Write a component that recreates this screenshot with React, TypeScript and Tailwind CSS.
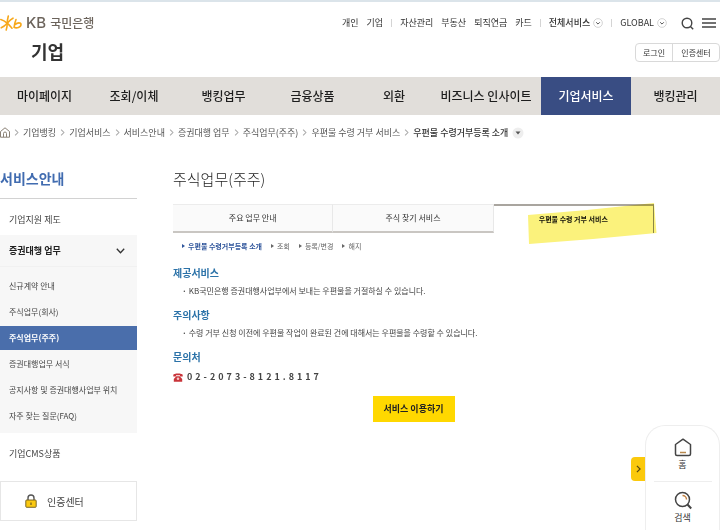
import React from 'react';

const navItems = ['마이페이지', '조회/이체', '뱅킹업무', '금융상품', '외환', '비즈니스 인사이트', '기업서비스', '뱅킹관리'];

const crumbs = ['기업뱅킹', '기업서비스', '서비스안내', '증권대행 업무', '주식업무(주주)', '우편물 수령 거부 서비스'];

const subMenu = [
  '신규계약 안내',
  '주식업무(회사)',
  '주식업무(주주)',
  '증권대행업무 서식',
  '공지사항 및 증권대행사업부 위치',
  '자주 찾는 질문(FAQ)',
];

const tabs = ['주요 업무 안내', '주식 찾기 서비스', '우편물 수령 거부 서비스'];

const subTabs = ['우편물 수령거부등록 소개', '조회', '등록/변경', '해지'];

// digits are set apart with three-per-em spaces
const phone = '02-2073-8121.8117'.split('').join('\u2004');

const Chevron: React.FC<{ className?: string }> = ({ className }) => (
  <svg viewBox="0 0 6 10" className={className} fill="none" stroke="currentColor" strokeWidth="1.5">
    <path d="M1 1l4 4-4 4" />
  </svg>
);

const CircleDown: React.FC = () => (
  <svg viewBox="0 0 11 11" className="h-[10px] w-[10px]" fill="none">
    <circle cx="5.5" cy="5.5" r="4.8" stroke="#c4c4c4" strokeWidth="0.8" />
    <path d="M3.5 4.7l2 2 2-2" stroke="#555" strokeWidth="1.1" />
  </svg>
);

const Divider: React.FC = () => <span className="h-2 w-px bg-[#d4d4d4]" />;

const Logo: React.FC = () => (
  <a href="#" className="flex items-center text-[#6b635b]">
    <svg viewBox="0 0 22 16" className="h-4 w-[22px]" fill="none" stroke="#f7a81b" strokeWidth="1.6" strokeLinecap="round">
      <path d="M0.8 4.6C3.5 5.4 5.5 6.8 7.2 8.2C9 9.700 10.500 11.500 12 13.200" />
      <path d="M1.200 12.800C3.500 11.800 5.500 10 7.200 8.200C8.800 6.500 10.500 4.500 13 3.200" />
      <path d="M8.300 1C7.600 4 7.200 6 7.200 8.200C7.200 10.500 7 12.500 6.200 15" />
      <path d="M16 4.500C15 7 14.300 9.500 14.100 12.300C16.500 13.600 21 12.300 21 9.500C21 7.300 17.500 7.300 15 9.600" />
    </svg>
    <span className="ml-1 font-[Inter,sans-serif] text-[15px] leading-4 font-medium">KB</span>
    <span className="ml-1 text-xs leading-4 font-medium">국민은행</span>
  </a>
);

const Header: React.FC = () => (
  <header className="border-t-2 border-[#dbe4ea] text-[#333]">
    <div className="flex h-[75px] justify-between">
      <div className="pt-[13px]">
        <Logo />
        <h1 className="mt-2 ml-[31px] text-lg leading-6 font-bold">기업</h1>
      </div>
      <div className="flex flex-col items-end">
        <div className="mt-[13px] flex h-4 items-center gap-2 pr-1 text-[9px] leading-4">
          <a href="#">개인</a>
          <a href="#">기업</a>
          <Divider />
          <a href="#">자산관리</a>
          <a href="#">부동산</a>
          <a href="#">퇴직연금</a>
          <a href="#">카드</a>
          <Divider />
          <button className="flex items-center gap-[3px] font-medium">전체서비스 <CircleDown /></button>
          <Divider />
          <button className="flex items-center gap-[3px]">GLOBAL <CircleDown /></button>
          <button aria-label="검색" className="ml-[6px]">
            <svg viewBox="0 0 13 13" className="h-[13px] w-[13px]" fill="none" stroke="#444" strokeWidth="1.4">
              <circle cx="6" cy="6" r="4.800" />
              <path d="M9.400 9.400l2.800 2.800" />
            </svg>
          </button>
          <button aria-label="전체메뉴">
            <svg viewBox="0 0 14 10" className="h-[10px] w-[14px]" stroke="#444" strokeWidth="1.600">
              <path d="M0 1h14M0 5h14M0 9h14" />
            </svg>
          </button>
        </div>
        <div className="mt-3 flex h-[19px] rounded-sm border border-[#d9d9d9] text-[8px] leading-4">
          <button className="w-[37px] border-r border-[#d9d9d9]">로그인</button>
          <button className="w-[46px]">인증센터</button>
        </div>
      </div>
    </div>
    <nav className="grid h-[38px] grid-cols-[89fr_90fr_89fr_89fr_74fr_110fr_90fr_89fr] bg-[#e1deda] text-xs font-medium text-[#1d1d1d]">
      {navItems.map((item) => (
        <a
          key={item}
          href="#"
          className={
            item === '기업서비스'
              ? 'flex items-center justify-center bg-[#394d83] text-white'
              : 'flex items-center justify-center'
          }
        >
          {item}
        </a>
      ))}
    </nav>
  </header>
);

const Breadcrumb: React.FC = () => (
  <div className="flex h-[34px] items-center gap-1 pt-px text-[9px] leading-4 text-[#555]">
    <a href="#" aria-label="홈">
      <svg viewBox="0 0 10 11" className="h-[11px] w-[10px]" fill="none" stroke="#8a8176" strokeWidth="1">
        <path d="M0.5 4.500L5 0.800l4.500 3.700v5.700h-9z" />
        <path d="M3.500 10V6.500a1.500 1.500 0 013 0V10" />
      </svg>
    </a>
    <Chevron className="h-[7px] w-[5px] text-[#aaa]" />
    {crumbs.map((crumb) => (
      <React.Fragment key={crumb}>
        <a href="#">{crumb}</a>
        <Chevron className="h-[7px] w-[5px] text-[#aaa]" />
      </React.Fragment>
    ))}
    <button className="flex items-center gap-1 font-medium text-[#333]">
      우편물 수령거부등록 소개
      <svg viewBox="0 0 12 12" className="h-3 w-3">
        <circle cx="6" cy="6" r="5.500" fill="#eeeeee" />
        <path d="M3.500 4.500h5L6 7.500z" fill="#555" />
      </svg>
    </button>
  </div>
);

const Sidebar: React.FC = () => (
  <aside className="w-[137px] shrink-0 text-[#444]">
    <h2 className="h-[33px] border-b border-[#d2d2d2] text-sm leading-6 font-bold text-[#416cb0]">서비스안내</h2>
    <a href="#" className="flex h-9 items-center pt-[6px] pl-[9px] text-[9px]">기업지원 제도</a>
    <div className="bg-[#f7f7f7] pb-1">
      <button className="flex h-8 w-full items-center justify-between border-b border-[#f1f1f1] pt-px pr-3 pl-[9px] text-[9px] font-bold text-[#222]">
        증권대행 업무
        <svg viewBox="0 0 9 6" className="h-[6px] w-[9px]" fill="none" stroke="#333" strokeWidth="1.300">
          <path d="M0.800 0.800l3.700 4 3.700-4" />
        </svg>
      </button>
      <ul className="pt-[6px] text-[8px]">
        {subMenu.map((item) => (
          <li key={item} className="flex h-[26px] items-center">
            <a
              href="#"
              className={
                item === '주식업무(주주)'
                  ? 'block h-6 w-full bg-[#4a6eab] pl-[9px] leading-6 font-bold text-white'
                  : 'block w-full pl-[9px] leading-6'
              }
            >
              {item}
            </a>
          </li>
        ))}
      </ul>
    </div>
    <a href="#" className="flex h-[42px] items-center pl-[9px] text-[9px]">기업CMS상품</a>
    <a href="#" className="mt-[6px] flex h-10 items-center gap-[10px] border border-[#e6e6e6] pl-6 text-[10px]">
      <svg viewBox="0 0 12 14" className="h-[14px] w-3">
        <path d="M3 7V4a3 3 0 016 0v3" fill="none" stroke="#555" strokeWidth="1.400" />
        <rect x="0.800" y="6" width="10.400" height="7.300" rx="0.800" fill="#fbc910" stroke="#6d5a1e" strokeWidth="0.900" />
        <path d="M6 8.500v2.500" stroke="#6d5a1e" strokeWidth="1.200" />
      </svg>
      인증센터
    </a>
  </aside>
);

const Tabs: React.FC = () => (
  <div className="mt-[13px] grid h-[29px] grid-cols-3 text-[#333]">
    {tabs.map((tab, i) =>
      i === 2 ? (
        <button key={tab} className="relative border-t-2 border-r border-t-[#a9a59f] border-r-[#8d8d8d] text-[7px] font-bold text-[#111]">
          {tab}
          {/* marker stroke */}
          <svg
            viewBox="0 0 130 43"
            className="pointer-events-none absolute -top-1 -right-1 h-[43px] w-[130px] mix-blend-multiply"
          >
            <path d="M1 13L60 8L127 1L129.500 31L66 37L2 42z" fill="#fbf27c" />
          </svg>
        </button>
      ) : (
        <button
          key={tab}
          className="border-t border-r border-b-2 border-t-[#ececec] border-r-[#e8e8e8] border-b-[#c9c6c2] bg-[#fafafa] text-[8px]"
        >
          {tab}
        </button>
      )
    )}
  </div>
);

const Section: React.FC<{ title: string; text: string }> = ({ title, text }) => (
  <section className="mb-[6px]">
    <h3 className="text-[10px] leading-5 font-bold text-[#2b72a8]">{title}</h3>
    <p className="flex gap-[2px] pl-[9px] text-[8px] leading-4 text-[#444]">
      <span className="font-bold">·</span>
      {text}
    </p>
  </section>
);

const Content: React.FC = () => (
  <main className="mr-[66px] ml-9 min-w-0 flex-1">
    <h2 className="pt-px text-[15px] leading-6 font-light text-[#222]">주식업무(주주)</h2>
    <Tabs />
    <ul className="mt-[3px] flex h-5 items-center gap-[9px] pl-[9px] text-[7px] text-[#666]">
      {subTabs.map((item, i) => (
        <li key={item}>
          <a href="#" className={i === 0 ? 'flex items-center gap-[3px] font-bold text-[#2f559b]' : 'flex items-center gap-[3px]'}>
            <svg viewBox="0 0 3 4" className="h-1 w-[3px]" fill="currentColor">
              <path d="M0 0l3 2-3 2z" />
            </svg>
            {item}
          </a>
        </li>
      ))}
    </ul>
    <div className="mt-[7px]">
      <Section title="제공서비스" text="KB국민은행 증권대행사업부에서 보내는 우편물을 거절하실 수 있습니다." />
      <Section title="주의사항" text="수령 거부 신청 이전에 우편물 작업이 완료된 건에 대해서는 우편물을 수령할 수 있습니다." />
      <section>
        <h3 className="text-[10px] leading-5 font-bold text-[#2b72a8]">문의처</h3>
        <p className="flex items-center gap-1 text-[9px] leading-5 font-bold text-[#444]">
          <svg viewBox="0 0 10 9" className="h-[9px] w-[10px]" fill="#c9343a">
            <path d="M0.300 3.400V2C0.300 0 9.700 0 9.700 2v1.400H7V2.300H3v1.100z" />
            <path d="M3.300 3.200h3.400L9.200 6v2.700H0.800V6z" />
            <circle cx="5" cy="5.800" r="1.300" fill="#f3c6c6" />
          </svg>
          {phone}
        </p>
      </section>
    </div>
    <div className="mt-[9px] flex justify-center">
      <button className="h-[26px] w-[82px] bg-[#ffd800] text-[9px] font-bold text-[#222]">서비스 이용하기</button>
    </div>
  </main>
);

const QuickMenu: React.FC = () => (
  <div className="fixed right-0 bottom-0 flex items-start">
    <button aria-label="열기" className="mt-8 flex h-6 w-[14px] items-center justify-center rounded-l bg-[#fbc90c] text-[#5a4a10]">
      <Chevron className="h-2 w-[5px]" />
    </button>
    <div className="flex h-[105px] w-[75px] flex-col items-center rounded-t-[20px] border border-b-0 border-[#eeeeee] bg-white text-[9px] leading-4 text-[#333]">
      <a href="#" className="flex h-14 w-[58px] flex-col items-center border-b border-[#eeeeee] pt-3">
        <svg viewBox="0 0 18 19" className="h-[19px] w-[18px]" fill="none" stroke="#444" strokeWidth="1.500" strokeLinejoin="round">
          <path d="M1.500 6.500L9 1.200l7.500 5.300v9.500a1.500 1.500 0 01-1.500 1.500H3A1.500 1.500 0 011.500 16z" />
          <path d="M6 14.500h6" stroke="#b98a4e" />
        </svg>
        홈
      </a>
      <a href="#" className="flex flex-col items-center pt-[9px]">
        <svg viewBox="0 0 18 19" className="h-[19px] w-[18px]" fill="none" stroke="#444" strokeWidth="1.500">
          <circle cx="8.500" cy="8.500" r="7" />
          <path d="M13.500 13.500l3.700 4" strokeWidth="2" />
          <path d="M8.500 4.500a4 4 0 014 4" stroke="#c07f3e" />
        </svg>
        검색
      </a>
    </div>
  </div>
);

const App: React.FC = () => {
  return (
    <div className="bg-white font-['Noto_Sans_CJK_KR',sans-serif]">
      <Header />
      <Breadcrumb />
      <div className="flex pt-[17px]">
        <Sidebar />
        <Content />
      </div>
      <QuickMenu />
    </div>
  );
};

export default App;
